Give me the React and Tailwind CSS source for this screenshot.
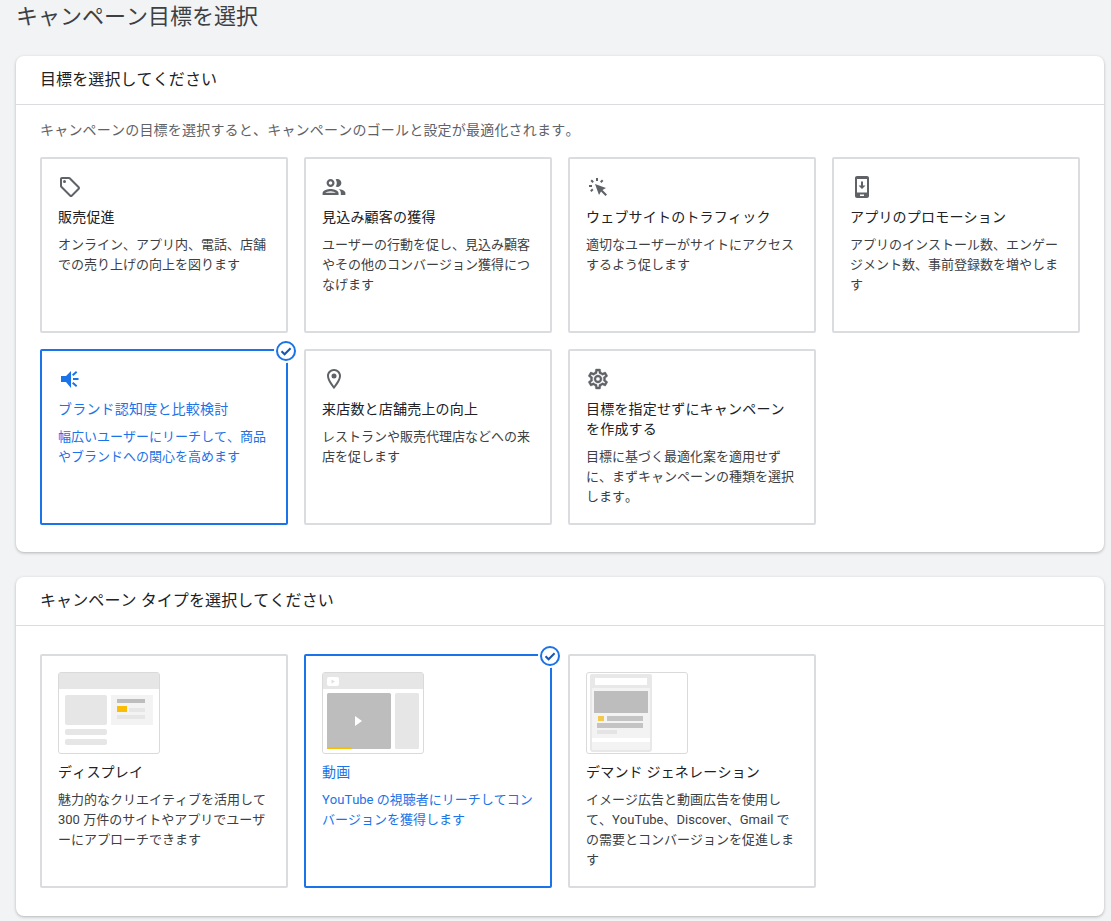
import React from "react";

const Path = ({ d, children, transform, thick }) => (
  <svg width="24" height="24" viewBox="0 0 24 24" fill="currentColor" className="block">
    <path d={d} transform={transform} stroke={thick ? "currentColor" : "none"} strokeWidth={thick ? 0.4 : 0} />
    {children}
  </svg>
);

const Tag = () => (
  <Path d="M21.41 11.58l-9-9C12.05 2.22 11.55 2 11 2H4c-1.1 0-2 .9-2 2v7c0 .55.22 1.05.59 1.42l9 9c.36.36.86.58 1.41.58s1.05-.22 1.41-.59l7-7c.37-.36.59-.86.59-1.41s-.23-1.06-.59-1.42zM13 20.01L4 11V4h7v-.01l9 9-7 7.02z">
    <circle cx="6.5" cy="6.5" r="1.5" />
  </Path>
);
const People = () => (
  <Path
    transform="translate(-1.7 -1.7) scale(1.14)"
    d="M9 13.75c-2.34 0-7 1.17-7 3.5V19h14v-1.75c0-2.33-4.66-3.5-7-3.5zM4.34 17c.84-.58 2.87-1.25 4.66-1.25s3.82.67 4.66 1.25H4.34zM9 12c1.93 0 3.5-1.57 3.5-3.5S10.93 5 9 5 5.5 6.57 5.5 8.5 7.07 12 9 12zm0-5c.83 0 1.5.67 1.5 1.5S9.83 10 9 10s-1.5-.67-1.5-1.5S8.17 7 9 7zm7.04 6.81c1.16.84 1.96 1.96 1.96 3.44V19h4v-1.75c0-2.02-3.5-3.17-5.96-3.44zM15 12c1.93 0 3.5-1.57 3.5-3.5S16.93 5 15 5c-.54 0-1.04.13-1.5.35.63.89 1 1.98 1 3.15s-.37 2.26-1 3.15c.46.22.96.35 1.5.35z"
  />
);
const Click = () => (
  <Path d="M9 9l11 4-3.5 2 4.5 4.5-1.5 1.5-4.5-4.5-2 3.500zM10 3h2v3h-2zM3 10h3v2H3zM4.500 5.900l1.400-1.400 2 2-1.400 1.400zM16 4.500l1.400 1.400-2 2-1.400-1.400zM6.100 13.500l1.400 1.400-2 2-1.400-1.400z" />
);
const Phone = () => (
  <Path d="M17 1.01L7 1c-1.1 0-2 .9-2 2v18c0 1.1.9 2 2 2h10c1.1 0 2-.9 2-2V3c0-1.1-.9-1.99-2-1.99zM17 17.5H7V4h10v13.500zM10 19.500h4v1.500h-4zM15.500 10.500H13V6.500h-2v4H8.500L12 14z" />
);
const Campaign = () => (
  <Path d="M3 9h5l5-5v17l-5-6H3zM15 11h5.500v2H15zM14 7.500l4-3.500 1.300 1.500-4 3.500zM14 16.500l1.300-1.500 4 3.500-1.300 1.500z" />
);
const Place = () => (
  <Path d="M12 2C8.13 2 5 5.13 5 9c0 5.25 7 13 7 13s7-7.75 7-13c0-3.87-3.13-7-7-7zM7 9c0-2.76 2.24-5 5-5s5 2.24 5 5c0 2.88-2.88 7.19-5 9.88C9.92 16.21 7 11.85 7 9z">
    <circle cx="12" cy="9" r="2.5" />
  </Path>
);
const Gear = () => (
  <Path
    thick
    d="M19.43 12.98c.04-.32.07-.64.07-.98 0-.34-.03-.66-.07-.98l2.11-1.65c.19-.15.24-.42.12-.64l-2-3.46c-.09-.16-.26-.25-.44-.25-.06 0-.12.01-.17.03l-2.49 1c-.52-.4-1.08-.73-1.69-.98l-.38-2.65C14.46 2.18 14.25 2 14 2h-4c-.25 0-.46.18-.49.42l-.38 2.65c-.61.25-1.17.59-1.69.98l-2.49-1c-.06-.02-.12-.03-.18-.03-.17 0-.34.09-.43.25l-2 3.46c-.13.22-.07.49.12.64l2.11 1.65c-.04.32-.07.65-.07.98 0 .33.03.66.07.98l-2.11 1.65c-.19.15-.24.42-.12.64l2 3.46c.09.16.26.25.44.25.06 0 .12-.01.17-.03l2.49-1c.52.4 1.08.73 1.69.98l.38 2.65c.03.24.24.42.49.42h4c.25 0 .46-.18.49-.42l.38-2.65c.61-.25 1.17-.59 1.69-.98l2.49 1c.06.02.12.03.18.03.17 0 .34-.09.43-.25l2-3.46c.12-.22.07-.49-.12-.64l-2.11-1.65zm-1.98-1.71c.04.31.05.52.05.73 0 .21-.02.43-.05.73l-.14 1.13.89.7 1.08.84-.7 1.21-1.27-.51-1.04-.42-.9.68c-.43.32-.84.56-1.25.73l-1.06.43-.16 1.13-.2 1.35h-1.4l-.19-1.35-.16-1.13-1.06-.43c-.43-.18-.83-.41-1.23-.71l-.91-.7-1.06.43-1.27.51-.7-1.21 1.08-.84.89-.7-.14-1.13c-.03-.31-.05-.54-.05-.74s.02-.43.05-.73l.14-1.13-.89-.7-1.08-.84.7-1.21 1.27.51 1.04.42.9-.68c.43-.32.84-.56 1.25-.73l1.06-.43.16-1.13.2-1.35h1.39l.19 1.35.16 1.13 1.06.43c.43.18.83.41 1.23.71l.91.7 1.06-.43 1.27-.51.7 1.21-1.07.85-.89.7.14 1.13zM12 8c-2.21 0-4 1.79-4 4s1.79 4 4 4 4-1.79 4-4-1.79-4-4-4zm0 6c-1.1 0-2-.9-2-2s.9-2 2-2 2 .9 2 2-.9 2-2 2z"
  />
);

const ThumbFrame = ({ children }) => (
  <svg width="102" height="82" viewBox="0 0 102 82" className="block">
    <rect x="0.5" y="0.5" width="101" height="81" rx="2.5" fill="#fff" />
    {children}
    <rect x="0.5" y="0.5" width="101" height="81" rx="2.5" fill="none" stroke="#dadada" />
  </svg>
);

const DisplayThumb = () => (
  <ThumbFrame>
    <path d="M1 3a2 2 0 0 1 2-2h96a2 2 0 0 1 2 2v14H1z" fill="#e6e6e6" />
    <rect x="7" y="23" width="42" height="30" rx="2" fill="#e6e6e6" />
    <rect x="7" y="57" width="42" height="6" rx="2" fill="#e6e6e6" />
    <rect x="7" y="67" width="42" height="6" rx="2" fill="#e6e6e6" />
    <rect x="53" y="23" width="42" height="30" fill="#f3f3f3" />
    <rect x="59" y="27" width="28" height="4" fill="#bdbdbd" />
    <rect x="59" y="34" width="10" height="6" fill="#fbbc04" />
    <rect x="71" y="36" width="16" height="4" fill="#e6e6e6" />
    <rect x="59" y="43" width="28" height="4" fill="#e6e6e6" />
  </ThumbFrame>
);

const VideoThumb = () => (
  <ThumbFrame>
    <path d="M1 3a2 2 0 0 1 2-2h96a2 2 0 0 1 2 2v14H1z" fill="#e6e6e6" />
    <rect x="5" y="5" width="12" height="9" rx="2" fill="#fff" />
    <path d="M9.500 7.500l3.500 2-3.500 2z" fill="#e0e0e0" />
    <rect x="5" y="21" width="64" height="56" rx="1.500" fill="#bdbdbd" />
    <rect x="73" y="21" width="24" height="56" rx="1.500" fill="#e6e6e6" />
    <rect x="5" y="75" width="24" height="2" fill="#fbbc04" />
    <path d="M33 44l7 5-7 5z" fill="#fff" />
  </ThumbFrame>
);

const DemandThumb = () => (
  <ThumbFrame>
    <rect x="5" y="3" width="60" height="76" rx="2" fill="#f3f3f3" stroke="#e8e8e8" strokeWidth="2" />
    <path d="M4 4a2 2 0 0 1 2-2h58a2 2 0 0 1 2 2v12H4z" fill="#e8e8e8" />
    <rect x="9" y="6" width="52" height="7" fill="#fff" />
    <rect x="6" y="66" width="58" height="4" fill="#fff" />
    <rect x="8" y="19" width="54" height="22" fill="#bdbdbd" />
    <rect x="12" y="44" width="6" height="5" fill="#f2c94c" />
    <rect x="21" y="44" width="36" height="5" fill="#c4c4c4" />
    <rect x="11" y="51" width="46" height="5" fill="#c4c4c4" />
    <rect x="11" y="58" width="20" height="4" fill="#e4e4e4" />
  </ThumbFrame>
);

const Check = () => (
  <span className="absolute -top-[12px] -right-[12px] flex h-6 w-6 items-center justify-center rounded-full bg-white">
    <svg width="20" height="20" viewBox="0 0 20 20" fill="none" className="block">
      <circle cx="10" cy="10" r="9" stroke="#1a73e8" strokeWidth="2" />
      <path d="M5.500 10.200l3.100 3.100 6-6" stroke="#1a56b0" strokeWidth="2" />
    </svg>
  </span>
);

const Option = ({ icon, thumb, title, desc, selected, tall }) => (
  <div
    className={`relative box-border rounded-[2px] border-2 px-4 pt-4 ${tall ? "h-[234px]" : "h-[176px]"} ${
      selected ? "border-[#1a73e8] text-[#1a73e8]" : "border-[#dadce0]"
    }`}
  >
    {selected && <Check />}
    {icon && <div className={selected ? "text-[#1a73e8]" : "text-[#5f6368]"}>{icon}</div>}
    {thumb}
    <div className={`mt-2 text-[14px] leading-[20px] tracking-[0.2px] ${selected ? "text-[#1a73e8]" : "text-[#202124]"}`}>
      {title}
    </div>
    <p className={`mt-2 text-[13px] leading-[20px] ${selected ? "text-[#1a73e8]" : "text-[#3c4043]"}`}>
      {desc}
    </p>
  </div>
);

const Panel = ({ heading, children, className }) => (
  <section className={`ml-4 w-[1088px] rounded-lg bg-white shadow-[0_1px_3px_rgba(60,64,67,0.35)] ${className}`}>
    <h2 className="box-content flex h-[48px] items-center border-b border-[#dadce0] pl-6 text-[16px] font-normal leading-[24px] tracking-[0.1px] text-[#202124]">
      {heading}
    </h2>
    {children}
  </section>
);

const font = {
  fontFamily: '"Roboto", "Noto Sans CJK JP", sans-serif',
};

export default function App() {
  return (
    <div className="h-[921px] overflow-hidden bg-[#f1f3f4] [font-kerning:none]" style={font}>
      <h1 className="pl-4 pt-[3px] text-[22px] font-normal leading-[28px] text-[#3c4043]">
        キャンペーン目標を選択
      </h1>
      <Panel heading="目標を選択してください" className="mt-[25px] pb-[27px]">
        <p className="pl-6 pt-[15px] text-[14px] leading-[20px] tracking-[0.2px] text-[#5f6368]">
          キャンペーンの目標を選択すると、キャンペーンのゴールと設定が最適化されます。
        </p>
        <div className="mt-[17px] grid grid-cols-[repeat(4,248px)] gap-4 pl-6">
          <Option icon={<Tag />} title="販売促進" desc="オンライン、アプリ内、電話、店舗での売り上げの向上を図ります" />
          <Option icon={<People />} title="見込み顧客の獲得" desc="ユーザーの行動を促し、見込み顧客やその他のコンバージョン獲得につなげます" />
          <Option icon={<Click />} title="ウェブサイトのトラフィック" desc="適切なユーザーがサイトにアクセスするよう促します" />
          <Option icon={<Phone />} title="アプリのプロモーション" desc="アプリのインストール数、エンゲージメント数、事前登録数を増やします" />
          <Option selected icon={<Campaign />} title="ブランド認知度と比較検討" desc="幅広いユーザーにリーチして、商品やブランドへの関心を高めます" />
          <Option icon={<Place />} title="来店数と店舗売上の向上" desc="レストランや販売代理店などへの来店を促します" />
          <Option icon={<Gear />} title="目標を指定せずにキャンペーンを作成する" desc="目標に基づく最適化案を適用せずに、まずキャンペーンの種類を選択します。" />
        </div>
      </Panel>
      <Panel heading="キャンペーン タイプを選択してください" className="mt-[25px] pb-[28px]">
        <div className="mt-[28px] grid grid-cols-[repeat(4,248px)] gap-4 pl-6">
          <Option tall thumb={<DisplayThumb />} title="ディスプレイ" desc="魅力的なクリエイティブを活用して 300 万件のサイトやアプリでユーザーにアプローチできます" />
          <Option tall selected thumb={<VideoThumb />} title="動画" desc="YouTube の視聴者にリーチしてコンバージョンを獲得します" />
          <Option tall thumb={<DemandThumb />} title="デマンド ジェネレーション" desc="イメージ広告と動画広告を使用して、YouTube、Discover、Gmail での需要とコンバージョンを促進します" />
        </div>
      </Panel>
    </div>
  );
}
